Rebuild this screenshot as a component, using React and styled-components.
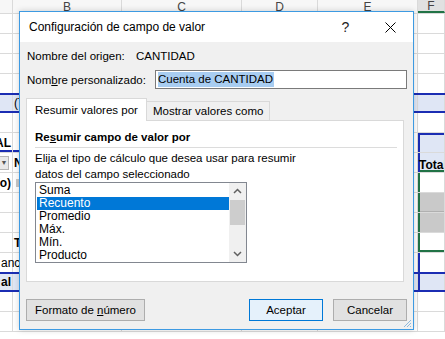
import React from 'react';
import styled, { createGlobalStyle } from 'styled-components';

const GlobalStyle = createGlobalStyle`
  html, body {
    margin: 0;
    padding: 0;
    background: #ffffff;
    overflow: hidden;
  }
  #root {
    width: 445px;
    height: 339px;
  }
`;

const UI_FONT = `"Liberation Sans", Arial, sans-serif`;
const SHEET_FONT = `"Liberation Sans", Arial, sans-serif`;
const PIVOT_BLUE = '#1b2db3';
const PIVOT_FILL = '#dfe6f5';
const GRID = '#dadada';

const Screen = styled.div`
  position: relative;
  width: 445px;
  height: 339px;
  overflow: hidden;
  font-family: ${SHEET_FONT};
`;

/* ---------- spreadsheet behind the dialog ---------- */

const Sheet = styled.div`
  display: flex;
  flex-direction: column;
`;

const SheetRow = styled.div`
  display: grid;
  grid-template-columns: 13px 109px 120px 76px 100px 1fr;
  height: ${p => (p.$header ? 14 : 20)}px;
  box-sizing: border-box;
  background: ${p => (p.$band ? PIVOT_FILL : '#ffffff')};
  border-top: ${p => (p.$band ? `2px solid ${PIVOT_BLUE}` : 'none')};
  border-bottom: ${p => (p.$band ? `2px solid ${PIVOT_BLUE}` : `1px solid ${GRID}`)};
  margin-top: ${p => (p.$band ? '-1px' : '0')};
`;

const HeadCell = styled.div`
  display: flex;
  align-items: center;
  justify-content: center;
  box-sizing: border-box;
  border-right: 1px solid ${GRID};
  font-size: 12px;
  color: #444;
  background: ${p => (p.$selected ? '#e1e1e1' : '#f7f7f7')};
  border-bottom: ${p => (p.$selected ? '2px solid #217346' : 'none')};
  overflow: hidden;
`;

const Cell = styled.div`
  position: relative;
  display: flex;
  align-items: ${p => (p.$bottom ? 'flex-end' : 'center')};
  justify-content: ${p => (p.$right ? 'flex-end' : 'flex-start')};
  box-sizing: border-box;
  padding: 0 1px;
  border-right: 1px solid ${GRID};
  font-size: 12px;
  font-weight: ${p => (p.$bold ? 700 : 400)};
  color: #000;
  white-space: nowrap;
  overflow: ${p => (p.$spill ? 'visible' : 'hidden')};
  background: ${p => p.$fill || 'transparent'};
  box-shadow: ${p => p.$edges || 'none'};
`;

const FilterButton = styled.div`
  width: 10px;
  height: 14px;
  box-sizing: border-box;
  border: 1px solid #b5b5b5;
  background: #e9e9e9;
  display: flex;
  align-items: center;
  justify-content: center;
  font-size: 7px;
  color: #555;
  margin-left: -2px;
`;

const Chip = styled.div`
  width: 3px;
  height: 8px;
  background: #c9c9c9;
  margin-left: 2px;
`;

/* ---------- dialog ---------- */

const Dialog = styled.div`
  position: absolute;
  left: 19px;
  top: 11px;
  width: 395px;
  height: 319px;
  box-sizing: border-box;
  border: 1px solid #3d9ae2;
  background: #f0f0f0;
  box-shadow: 0 0 6px rgba(0, 0, 0, 0.18);
  display: flex;
  flex-direction: column;
  font-family: ${UI_FONT};
  font-size: 11.5px;
  color: #000;
`;

const TitleBar = styled.div`
  height: 30px;
  background: #ffffff;
  display: flex;
  align-items: center;
  padding-left: 9px;
  flex-shrink: 0;
`;

const Title = styled.div`
  flex: 1;
  font-size: 12px;
`;

const CaptionButton = styled.div`
  width: 45px;
  height: 30px;
  display: flex;
  align-items: center;
  justify-content: center;
  font-size: 14px;
  color: #222;
`;

const Body = styled.div`
  flex: 1;
  display: flex;
  flex-direction: column;
  padding: 0 6px 0 7px;
`;

const FieldRow = styled.div`
  display: flex;
  align-items: center;
  height: ${p => p.$h}px;
  margin-top: 6px;
`;

const Label = styled.span`
  width: ${p => p.$w}px;
  flex-shrink: 0;
  white-space: nowrap;
`;

const TextBox = styled.div`
  flex: 1;
  height: 19px;
  box-sizing: border-box;
  border: 1px solid #7a7a7a;
  background: #ffffff;
  display: flex;
  align-items: center;
  padding-left: 2px;
`;

const Selected = styled.span`
  background: #a8cdf1;
  line-height: 15px;
  padding-right: 1px;
`;

const Tabs = styled.div`
  display: flex;
  align-items: flex-end;
  margin: 9px 0 0 -1px;
  height: 22px;
`;

const Tab = styled.div`
  height: ${p => (p.$active ? 23 : 19)}px;
  box-sizing: border-box;
  padding: 0 ${p => (p.$active ? 8 : 6)}px;
  display: flex;
  align-items: center;
  background: ${p => (p.$active ? '#ffffff' : '#f0f0f0')};
  border: 1px solid #d9d9d9;
  border-bottom: none;
  border-left: ${p => (p.$active ? '1px solid #d9d9d9' : 'none')};
  position: relative;
  z-index: ${p => (p.$active ? 1 : 0)};
  margin-bottom: ${p => (p.$active ? '-1px' : '0')};
  white-space: nowrap;
`;

const Panel = styled.div`
  margin-left: -1px;
  width: 378px;
  height: 162px;
  box-sizing: border-box;
  background: #ffffff;
  border: 1px solid #d9d9d9;
  padding: 7px 6px 0 8px;
  display: flex;
  flex-direction: column;
`;

const GroupTitle = styled.div`
  font-weight: 700;
  height: 17px;
  display: flex;
  align-items: center;
`;

const Rule = styled.div`
  height: 1px;
  background: #dcdcdc;
  margin-top: 2px;
`;

const Hint = styled.div`
  margin-top: 2px;
  line-height: 16px;
`;

const ListBox = styled.div`
  width: 212px;
  height: 81px;
  box-sizing: border-box;
  border: 1px solid #828790;
  background: #ffffff;
  display: flex;
`;

const Items = styled.div`
  flex: 1;
  padding: 1px 0 0 1px;
`;

const Item = styled.div`
  height: 13px;
  line-height: 13px;
  padding-left: 2px;
  font-size: 12px;
  background: ${p => (p.$selected ? '#0078d7' : 'transparent')};
  color: ${p => (p.$selected ? '#ffffff' : '#000')};
  overflow: hidden;
`;

const ScrollBar = styled.div`
  width: 17px;
  background: #f0f0f0;
  display: flex;
  flex-direction: column;
  align-items: center;
`;

const ScrollArrow = styled.div`
  height: 16px;
  display: flex;
  align-items: center;
  justify-content: center;
`;

const Thumb = styled.div`
  width: 15px;
  height: 25px;
  margin-top: 1px;
  background: #cdcdcd;
`;

const Filler = styled.div`
  flex: 1;
`;

const Footer = styled.div`
  display: flex;
  align-items: center;
  margin: 17px 0 0 -1px;
  gap: 10px;
`;

const Button = styled.div`
  height: 22px;
  width: ${p => p.$w}px;
  box-sizing: border-box;
  display: flex;
  align-items: center;
  justify-content: center;
  background: ${p => (p.$primary ? '#e5f1fb' : '#e1e1e1')};
  border: 1px solid ${p => (p.$primary ? '#0078d7' : '#adadad')};
  white-space: nowrap;
`;

const Spacer = styled.div`
  flex: 1;
`;

const Grip = styled.svg`
  position: absolute;
  right: 1px;
  bottom: 1px;
`;

const Chevron = ({ down }) => (
  <svg width="9" height="6" viewBox="0 0 9 6">
    <path
      d={down ? 'M1 1 L4.5 4.5 L8 1' : 'M1 5 L4.5 1.5 L8 5'}
      fill="none"
      stroke="#606060"
      strokeWidth="1.5"
    />
  </svg>
);

const blueLeft = `inset 2px 0 0 ${PIVOT_BLUE}`;

// per-row content for the sheet: column A, column B and column F
const rows = [
  {},
  {},
  {},
  {},
  { band: true, b: '(Todas)' },
  {},
  { a: 'TOTAL', aBold: true, aRight: true, edges: `inset 0 -2px 0 ${PIVOT_BLUE}`, f: { fill: PIVOT_FILL, edges: `${blueLeft}, inset 0 2px 0 ${PIVOT_BLUE}` } },
  { filter: true, b: 'N', bBold: true, f: { fill: PIVOT_FILL, text: 'Total', bottom: true, edges: `${blueLeft}, inset 0 -2px 0 #217346` } },
  { a: '(o)', aBold: true, aRight: true, chip: true, f: { edges: 'inset 2px 0 0 #217346' } },
  { f: { fill: '#c9c9c9', edges: 'inset 2px 0 0 #217346, inset 0 -1px 0 #b0b0b0' } },
  { f: { fill: '#c9c9c9', edges: 'inset 2px 0 0 #217346' } },
  { b: 'T', bBold: true, f: { edges: 'inset 2px 0 0 #217346, inset 0 -2px 0 #217346' } },
  { a: 'anc', spill: true, f: { edges: blueLeft } },
  { band: true, a: 'al', aBold: true, f: { edges: blueLeft } },
  {},
  {},
];

const App = () => {
  return (
    <Screen>
      <GlobalStyle />
      <Sheet>
        <SheetRow $header>
          <HeadCell />
          <HeadCell>B</HeadCell>
          <HeadCell>C</HeadCell>
          <HeadCell>D</HeadCell>
          <HeadCell>E</HeadCell>
          <HeadCell $selected>F</HeadCell>
        </SheetRow>
        {rows.map((r, i) => (
          <SheetRow key={i} $band={r.band}>
            <Cell $bold={r.aBold} $right={r.aRight} $spill={r.spill} $edges={r.edges}>
              {r.filter ? <FilterButton>▼</FilterButton> : r.a}
            </Cell>
            <Cell $bold={r.bBold} $edges={r.edges}>
              {r.chip ? <Chip /> : r.b}
            </Cell>
            <Cell />
            <Cell />
            <Cell />
            <Cell
              $fill={r.f && r.f.fill}
              $edges={r.f && r.f.edges}
              $bold
              $bottom={r.f && r.f.bottom}
            >
              {r.f && r.f.text}
            </Cell>
          </SheetRow>
        ))}
      </Sheet>

      <Dialog>
        <TitleBar>
          <Title>Configuración de campo de valor</Title>
          <CaptionButton>?</CaptionButton>
          <CaptionButton>
            <svg width="11" height="11" viewBox="0 0 11 11">
              <path d="M0.5 0.5 L10.5 10.5 M10.5 0.5 L0.5 10.5" stroke="#000" strokeWidth="1" />
            </svg>
          </CaptionButton>
        </TitleBar>
        <Body>
          <FieldRow $h={16}>
            <Label $w={109}>Nombre del origen:</Label>
            <span>CANTIDAD</span>
          </FieldRow>
          <FieldRow $h={19}>
            <Label $w={128}>
              Nom<u>b</u>re personalizado:
            </Label>
            <TextBox>
              <Selected>Cuenta de CANTIDAD</Selected>
            </TextBox>
          </FieldRow>
          <Tabs>
            <Tab $active>Resumir valores por</Tab>
            <Tab>Mostrar valores como</Tab>
          </Tabs>
          <Panel>
            <GroupTitle>
              Re<u>s</u>umir campo de valor por
            </GroupTitle>
            <Rule />
            <Hint>
              Elija el tipo de cálculo que desea usar para resumir
              <br />
              datos del campo seleccionado
            </Hint>
            <ListBox>
              <Items>
                <Item>Suma</Item>
                <Item $selected>Recuento</Item>
                <Item>Promedio</Item>
                <Item>Máx.</Item>
                <Item>Mín.</Item>
                <Item>Producto</Item>
              </Items>
              <ScrollBar>
                <ScrollArrow>
                  <Chevron />
                </ScrollArrow>
                <Thumb />
                <Filler />
                <ScrollArrow>
                  <Chevron down />
                </ScrollArrow>
              </ScrollBar>
            </ListBox>
          </Panel>
          <Footer>
            <Button $w={119}>
              Formato de&nbsp;<u>n</u>úmero
            </Button>
            <Spacer />
            <Button $w={74} $primary>Aceptar</Button>
            <Button $w={74}>Cancelar</Button>
          </Footer>
        </Body>
        <Grip width="9" height="9" viewBox="0 0 9 9">
          <path d="M8 1 L1 8 M8 4 L4 8 M8 7 L7 8" stroke="#8fb9dc" strokeWidth="1" />
        </Grip>
      </Dialog>
    </Screen>
  );
};

export default App;
